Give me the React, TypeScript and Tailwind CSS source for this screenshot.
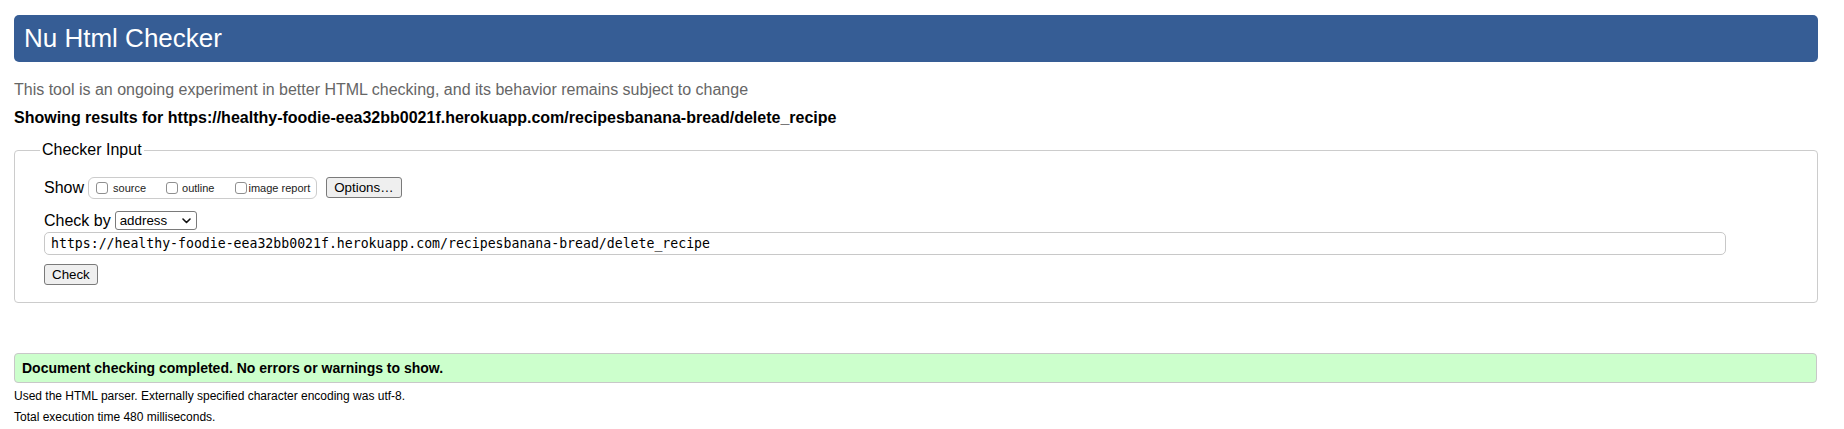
import React from 'react';

function Box({ label, gap }: { label: string; gap: string }) {
  return (
    <span className={`flex items-center ${gap}`}>
      <span className="inline-block h-[12px] w-[12px] rounded-[3px] border border-[#8f8f8f] bg-white" />
      <span className="text-[11px] leading-[12px] text-[#222]">{label}</span>
    </span>
  );
}

export default function App() {
  return (
    <div className="h-[429px] w-full bg-white pl-[14px] pr-[26px] pt-[15px] font-['Liberation_Sans',Arial,sans-serif] text-black">
      <div className="flex h-[47px] items-center rounded-[5px] bg-[#365d95] pl-[10px] text-[26px] text-white">
        Nu Html Checker
      </div>

      <p className="mt-[19px] text-[16px] leading-[18px] text-[#666]">
        This tool is an ongoing experiment in better HTML checking, and its behavior remains subject to change
      </p>
      <p className="mt-[10px] text-[16px] font-bold leading-[18px]">
        Showing results for https://healthy-foodie-eea32bb0021f.herokuapp.com/recipesbanana-bread/delete_recipe
      </p>

      <fieldset className="mt-[14px] rounded-[4px] border border-[#cccccc] pb-[17px] pl-[29px]">
        <legend className="-ml-[4px] px-[2px] text-[16px] leading-[18px]">Checker Input</legend>
        <div className="mt-[16px] flex flex-col">
          <div className="flex h-[25px] items-center">
            <span className="text-[16px] leading-[18px]">Show</span>
            <span className="ml-[4px] flex h-[22px] items-center rounded-[6px] border border-[#cccccc] pl-[7px] pr-[6px]">
              <Box label="source" gap="gap-[5px]" />
              <span className="w-[20px]" />
              <Box label="outline" gap="gap-[4px]" />
              <span className="w-[21px]" />
              <Box label="image report" gap="gap-[1px]" />
            </span>
            <button className="ml-[9px] h-[21px] rounded-[3px] border border-[#7a7a7a] bg-[#efefef] px-[7px] text-[13.33px] leading-[15px]">
              Options…
            </button>
          </div>

          <div className="mt-[10px] flex h-[21px] items-center">
            <span className="text-[16px] leading-[18px]">Check by</span>
            <span className="ml-[4px] flex h-[19px] w-[82px] items-center justify-between rounded-[3px] border border-[#7a7a7a] bg-white pl-[4px] pr-[5px] text-[13.33px]">
              address
              <svg width="9" height="6" viewBox="0 0 9 6" fill="none">
                <path d="M1 1l3.5 3.5L8 1" stroke="#111" strokeWidth="1.6" strokeLinecap="round" strokeLinejoin="round" />
              </svg>
            </span>
          </div>

          <div className="mt-[1px] flex h-[23px] w-[1682px] items-center rounded-[5px] border border-[#c8c8c8] pl-[6px] font-['DejaVu_Sans_Mono',monospace] text-[13.2px]">
            https://healthy-foodie-eea32bb0021f.herokuapp.com/recipesbanana-bread/delete_recipe
          </div>

          <div className="mt-[9px] flex">
            <button className="h-[21px] rounded-[3px] border border-[#7a7a7a] bg-[#efefef] px-[7px] text-[13.33px] leading-[15px]">
              Check
            </button>
          </div>
        </div>
      </fieldset>

      <div className="mr-[1px] mt-[50px] flex h-[30px] items-center rounded-[4px] border border-[#c8c8c8] bg-[#ccffcc] pl-[7px] text-[14px] font-bold">
        Document checking completed. No errors or warnings to show.
      </div>
      <p className="mt-[7px] text-[12px] leading-[13px]">
        Used the HTML parser. Externally specified character encoding was utf-8.
      </p>
      <p className="mt-[8px] text-[12px] leading-[13px]">Total execution time 480 milliseconds.</p>
    </div>
  );
}
